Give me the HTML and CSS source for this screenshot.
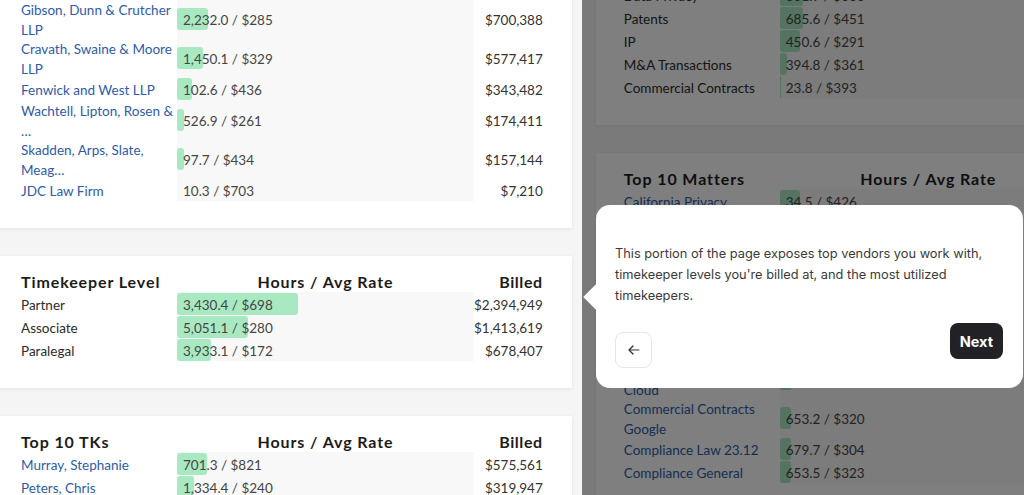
FILE: index.html
```html
<!DOCTYPE html>
<html>
<head>
  <meta charset="utf-8"/>
  <title>Spend Overview</title>
  <link rel="stylesheet" href="styles.css">
</head>
<body>
  <div class="board">
    <div class="col">
      <section class="card">
        <div class="thead">
          <span>Top 10 Vendors</span>
          <span class="h-hours">Hours / Avg Rate</span>
          <span class="h-billed">Billed</span>
        </div>
        <div class="row"><a class="name" href="#">Kirkland &amp; Ellis International LLP</a><div class="hours"><span class="bar" style="width:52px"></span><span class="val">3,410.2 / $352</span></div><span class="billed">$1,200,391</span></div>
        <div class="row"><a class="name" href="#">Wilson Sonsini Goodrich &amp; Rosati</a><div class="hours"><span class="bar" style="width:44px"></span><span class="val">2,611.7 / $390</span></div><span class="billed">$1,018,563</span></div>
        <div class="row"><a class="name" href="#">Cooley LLP</a><div class="hours"><span class="bar" style="width:40px"></span><span class="val">2,270.4 / $402</span></div><span class="billed">$912,701</span></div>
        <div class="row"><a class="name" href="#">Orrick LLP</a><div class="hours"><span class="bar" style="width:36px"></span><span class="val">2,119.9 / $381</span></div><span class="billed">$807,682</span></div>
        <div class="row"><a class="name" href="#">Gibson, Dunn &amp; Crutcher LLP</a><div class="hours"><span class="bar" style="width:31px"></span><span class="val">2,232.0 / $285</span></div><span class="billed">$700,388</span></div>
        <div class="row"><a class="name" href="#">Cravath, Swaine &amp; Moore LLP</a><div class="hours"><span class="bar" style="width:26px"></span><span class="val">1,450.1 / $329</span></div><span class="billed">$577,417</span></div>
        <div class="row"><a class="name" href="#">Fenwick and West LLP</a><div class="hours"><span class="bar" style="width:15px"></span><span class="val">102.6 / $436</span></div><span class="billed">$343,482</span></div>
        <div class="row"><a class="name" href="#">Wachtell, Lipton, Rosen &amp; …</a><div class="hours"><span class="bar" style="width:7px"></span><span class="val">526.9 / $261</span></div><span class="billed">$174,411</span></div>
        <div class="row"><a class="name" href="#">Skadden, Arps, Slate, Meag…</a><div class="hours"><span class="bar" style="width:7px"></span><span class="val">97.7 / $434</span></div><span class="billed">$157,144</span></div>
        <div class="row"><a class="name" href="#">JDC Law Firm</a><div class="hours"><span class="val">10.3 / $703</span></div><span class="billed">$7,210</span></div>
      </section>

      <section class="card">
        <div class="thead">
          <span>Timekeeper Level</span>
          <span class="h-hours">Hours / Avg Rate</span>
          <span class="h-billed">Billed</span>
        </div>
        <div class="row"><span class="name plain">Partner</span><div class="hours"><span class="bar" style="width:121px"></span><span class="val">3,430.4 / $698</span></div><span class="billed">$2,394,949</span></div>
        <div class="row"><span class="name plain">Associate</span><div class="hours"><span class="bar" style="width:71px"></span><span class="val">5,051.1 / $280</span></div><span class="billed">$1,413,619</span></div>
        <div class="row"><span class="name plain">Paralegal</span><div class="hours"><span class="bar" style="width:34px"></span><span class="val">3,933.1 / $172</span></div><span class="billed">$678,407</span></div>
      </section>

      <section class="card">
        <div class="thead">
          <span>Top 10 TKs</span>
          <span class="h-hours">Hours / Avg Rate</span>
          <span class="h-billed">Billed</span>
        </div>
        <div class="row"><a class="name" href="#">Murray, Stephanie</a><div class="hours"><span class="bar" style="width:30px"></span><span class="val">701.3 / $821</span></div><span class="billed">$575,561</span></div>
        <div class="row"><a class="name" href="#">Peters, Chris</a><div class="hours"><span class="bar" style="width:17px"></span><span class="val">1,334.4 / $240</span></div><span class="billed">$319,947</span></div>
        <div class="row"><a class="name" href="#">Nguyen, Alan</a><div class="hours"><span class="bar" style="width:15px"></span><span class="val">612.0 / $455</span></div><span class="billed">$278,460</span></div>
      </section>
    </div>

    <div class="col">
      <section class="card">
        <div class="thead">
          <span>Top Practice Areas</span>
          <span class="h-hours">Hours / Avg Rate</span>
          <span class="h-billed">Billed</span>
        </div>
        <div class="row"><span class="name plain">Intellectual Property Litigation</span><div class="hours"><span class="bar" style="width:60px"></span><span class="val">2,940.3 / $412</span></div><span class="billed">$1,211,404</span></div>
        <div class="row"><span class="name plain">Employment</span><div class="hours"><span class="bar" style="width:41px"></span><span class="val">1,802.5 / $318</span></div><span class="billed">$573,195</span></div>
        <div class="row"><span class="name plain">Litigation</span><div class="hours"><span class="bar" style="width:33px"></span><span class="val">1,512.8 / $344</span></div><span class="billed">$520,403</span></div>
        <div class="row"><span class="name plain">Regulatory</span><div class="hours"><span class="bar" style="width:28px"></span><span class="val">1,033.4 / $372</span></div><span class="billed">$384,424</span></div>
        <div class="row"><span class="name plain">Data Privacy</span><div class="hours"><span class="bar" style="width:23px"></span><span class="val">801.9 / $366</span></div><span class="billed">$293,495</span></div>
        <div class="row"><span class="name plain">Patents</span><div class="hours"><span class="bar" style="width:23px"></span><span class="val">685.6 / $451</span></div><span class="billed">$309,206</span></div>
        <div class="row"><span class="name plain">IP</span><div class="hours"><span class="bar" style="width:20px"></span><span class="val">450.6 / $291</span></div><span class="billed">$131,125</span></div>
        <div class="row"><span class="name plain">M&amp;A Transactions</span><div class="hours"><span class="bar" style="width:7px"></span><span class="val">394.8 / $361</span></div><span class="billed">$142,523</span></div>
        <div class="row"><span class="name plain">Commercial Contracts</span><div class="hours"><span class="bar" style="width:1px"></span><span class="val">23.8 / $393</span></div><span class="billed">$9,353</span></div>
      </section>

      <section class="card">
        <div class="thead">
          <span>Top 10 Matters</span>
          <span class="h-hours">Hours / Avg Rate</span>
          <span class="h-billed">Billed</span>
        </div>
        <div class="row"><a class="name" href="#">California Privacy</a><div class="hours"><span class="bar" style="width:20px"></span><span class="val">34.5 / $426</span></div><span class="billed">$14,697</span></div>
        <div class="row"><a class="name" href="#">Cloud Services Agreement Review</a><div class="hours"><span class="bar" style="width:12px"></span><span class="val">702.4 / $311</span></div><span class="billed">$218,446</span></div>
        <div class="row"><a class="name" href="#">Data Breach</a><div class="hours"><span class="bar" style="width:12px"></span><span class="val">688.0 / $298</span></div><span class="billed">$205,024</span></div>
        <div class="row"><a class="name" href="#">Commercial Contracts AWS</a><div class="hours"><span class="bar" style="width:12px"></span><span class="val">671.5 / $317</span></div><span class="billed">$212,866</span></div>
        <div class="row"><a class="name" href="#">Class Action</a><div class="hours"><span class="bar" style="width:11px"></span><span class="val">664.9 / $309</span></div><span class="billed">$205,454</span></div>
        <div class="row"><a class="name" href="#">Cybersecurity</a><div class="hours"><span class="bar" style="width:11px"></span><span class="val">660.2 / $300</span></div><span class="billed">$198,060</span></div>
        <div class="row"><a class="name" href="#">Commercial Contracts Cloud</a><div class="hours"><span class="bar" style="width:12px"></span><span class="val">658.1 / $322</span></div><span class="billed">$211,908</span></div>
        <div class="row"><a class="name" href="#">Commercial Contracts Google</a><div class="hours"><span class="bar" style="width:11px"></span><span class="val">653.2 / $320</span></div><span class="billed">$209,024</span></div>
        <div class="row"><a class="name" href="#">Compliance Law 23.12</a><div class="hours"><span class="bar" style="width:11px"></span><span class="val">679.7 / $304</span></div><span class="billed">$206,629</span></div>
        <div class="row"><a class="name" href="#">Compliance General</a><div class="hours"><span class="bar" style="width:11px"></span><span class="val">653.5 / $323</span></div><span class="billed">$211,081</span></div>
      </section>
    </div>
  </div>

  <!-- product tour -->
  <div class="tour-mask"></div>
  <div class="tour-pop">
    <div class="tour-arrow"></div>
    <p class="tour-text">This portion of the page exposes top vendors you work with, timekeeper levels you're billed at, and the most utilized timekeepers.</p>
    <div class="tour-foot">
      <button class="tour-back" aria-label="Back">
        <svg width="14" height="12" viewBox="0 0 14 12">
          <path d="M6 2 L2 6 L6 10" fill="none" stroke="#333" stroke-width="1.4" stroke-linecap="round" stroke-linejoin="round"/>
          <path d="M2.5 6 H12" fill="none" stroke="#333" stroke-width="1" stroke-linecap="round"/>
        </svg>
      </button>
      <button class="tour-next">Next</button>
    </div>
  </div>
</body>
</html>
```

FILE: styles.css
```css
html, body {
  margin: 0;
  height: 100%;
  overflow: hidden;
}
body {
  font-family: Lato, "Open Sans", sans-serif;
  font-size: 13.5px;
  color: #333;
  background-color: #f5f5f5;
}

.board {
  display: flex;
  gap: 24px;
  margin: -161px 0 0 -7px;
}
.col {
  display: flex;
  flex-direction: column;
  gap: 28px;
  flex: 0 0 577px;
}

.card {
  background-color: #fff;
  padding: 15px 29px 27px 28px;
  box-shadow: 0 1px 4px rgba(0,0,0,0.08);
}

.thead,
.row {
  display: grid;
  grid-template-columns: 156px 297px 1fr;
}
.thead {
  font-size: 16px;
  font-weight: bold;
  line-height: 21px;
  letter-spacing: 0.9px;
  color: #1c1c1c;
}
.h-hours {
  text-align: center;
}
.h-billed {
  text-align: right;
  letter-spacing: 0.6px;
}

.row {
  line-height: 19.5px;
  min-height: 23px;
}
/* Lato sits a bit high in its line box */
.row .name,
.row .val,
.row .billed {
  translate: 0 1.5px;
}
.name {
  align-self: center;
  color: #2d5ca8;
  text-decoration: none;
}
.name.plain {
  color: #2b2b2b;
}
.hours {
  position: relative;
  display: flex;
  align-items: center;
  background-color: #f8f8f8;
}
.bar {
  position: absolute;
  left: 0;
  top: 50%;
  height: 22px;
  margin-top: -11px;
  background-color: #a9e9c2;
  border-radius: 3px;
}
.val {
  position: relative;
  padding-left: 6px;
  color: #454545;
}
.billed {
  align-self: center;
  text-align: right;
  color: #333;
}

/* tour overlay */
.tour-mask {
  position: fixed;
  top: 0;
  bottom: 0;
  left: 582px;
  right: 0;
  background-color: rgba(0,0,0,0.5);
}
.tour-pop {
  position: fixed;
  top: 205px;
  left: 596px;
  width: 427px;
  box-sizing: border-box;
  padding: 20px 20px 20px 19px;
  background-color: #fff;
  border-radius: 14px;
  font-family: Inter, Roboto, sans-serif;
}
.tour-arrow {
  position: absolute;
  left: -9px;
  top: 83px;
  width: 18px;
  height: 18px;
  background-color: #fff;
  transform: rotate(45deg);
}
.tour-text {
  margin: 17.5px 0 0;
  font-size: 12.8px;
  line-height: 21px;
  color: #3a3a3a;
}
.tour-foot {
  display: flex;
  justify-content: space-between;
  align-items: flex-start;
  margin-top: 17.5px;
}
.tour-back {
  display: flex;
  align-items: center;
  justify-content: center;
  width: 37px;
  height: 36px;
  margin-top: 9px;
  padding: 0;
  background: #fff;
  border: 1px solid #e6e6e6;
  border-radius: 8px;
  cursor: pointer;
}
.tour-next {
  height: 36px;
  padding: 0 10px;
  background-color: #222226;
  color: #fff;
  border: none;
  border-radius: 8px;
  font-family: Inter, Roboto, sans-serif;
  font-size: 14.5px;
  font-weight: bold;
  cursor: pointer;
}
```
